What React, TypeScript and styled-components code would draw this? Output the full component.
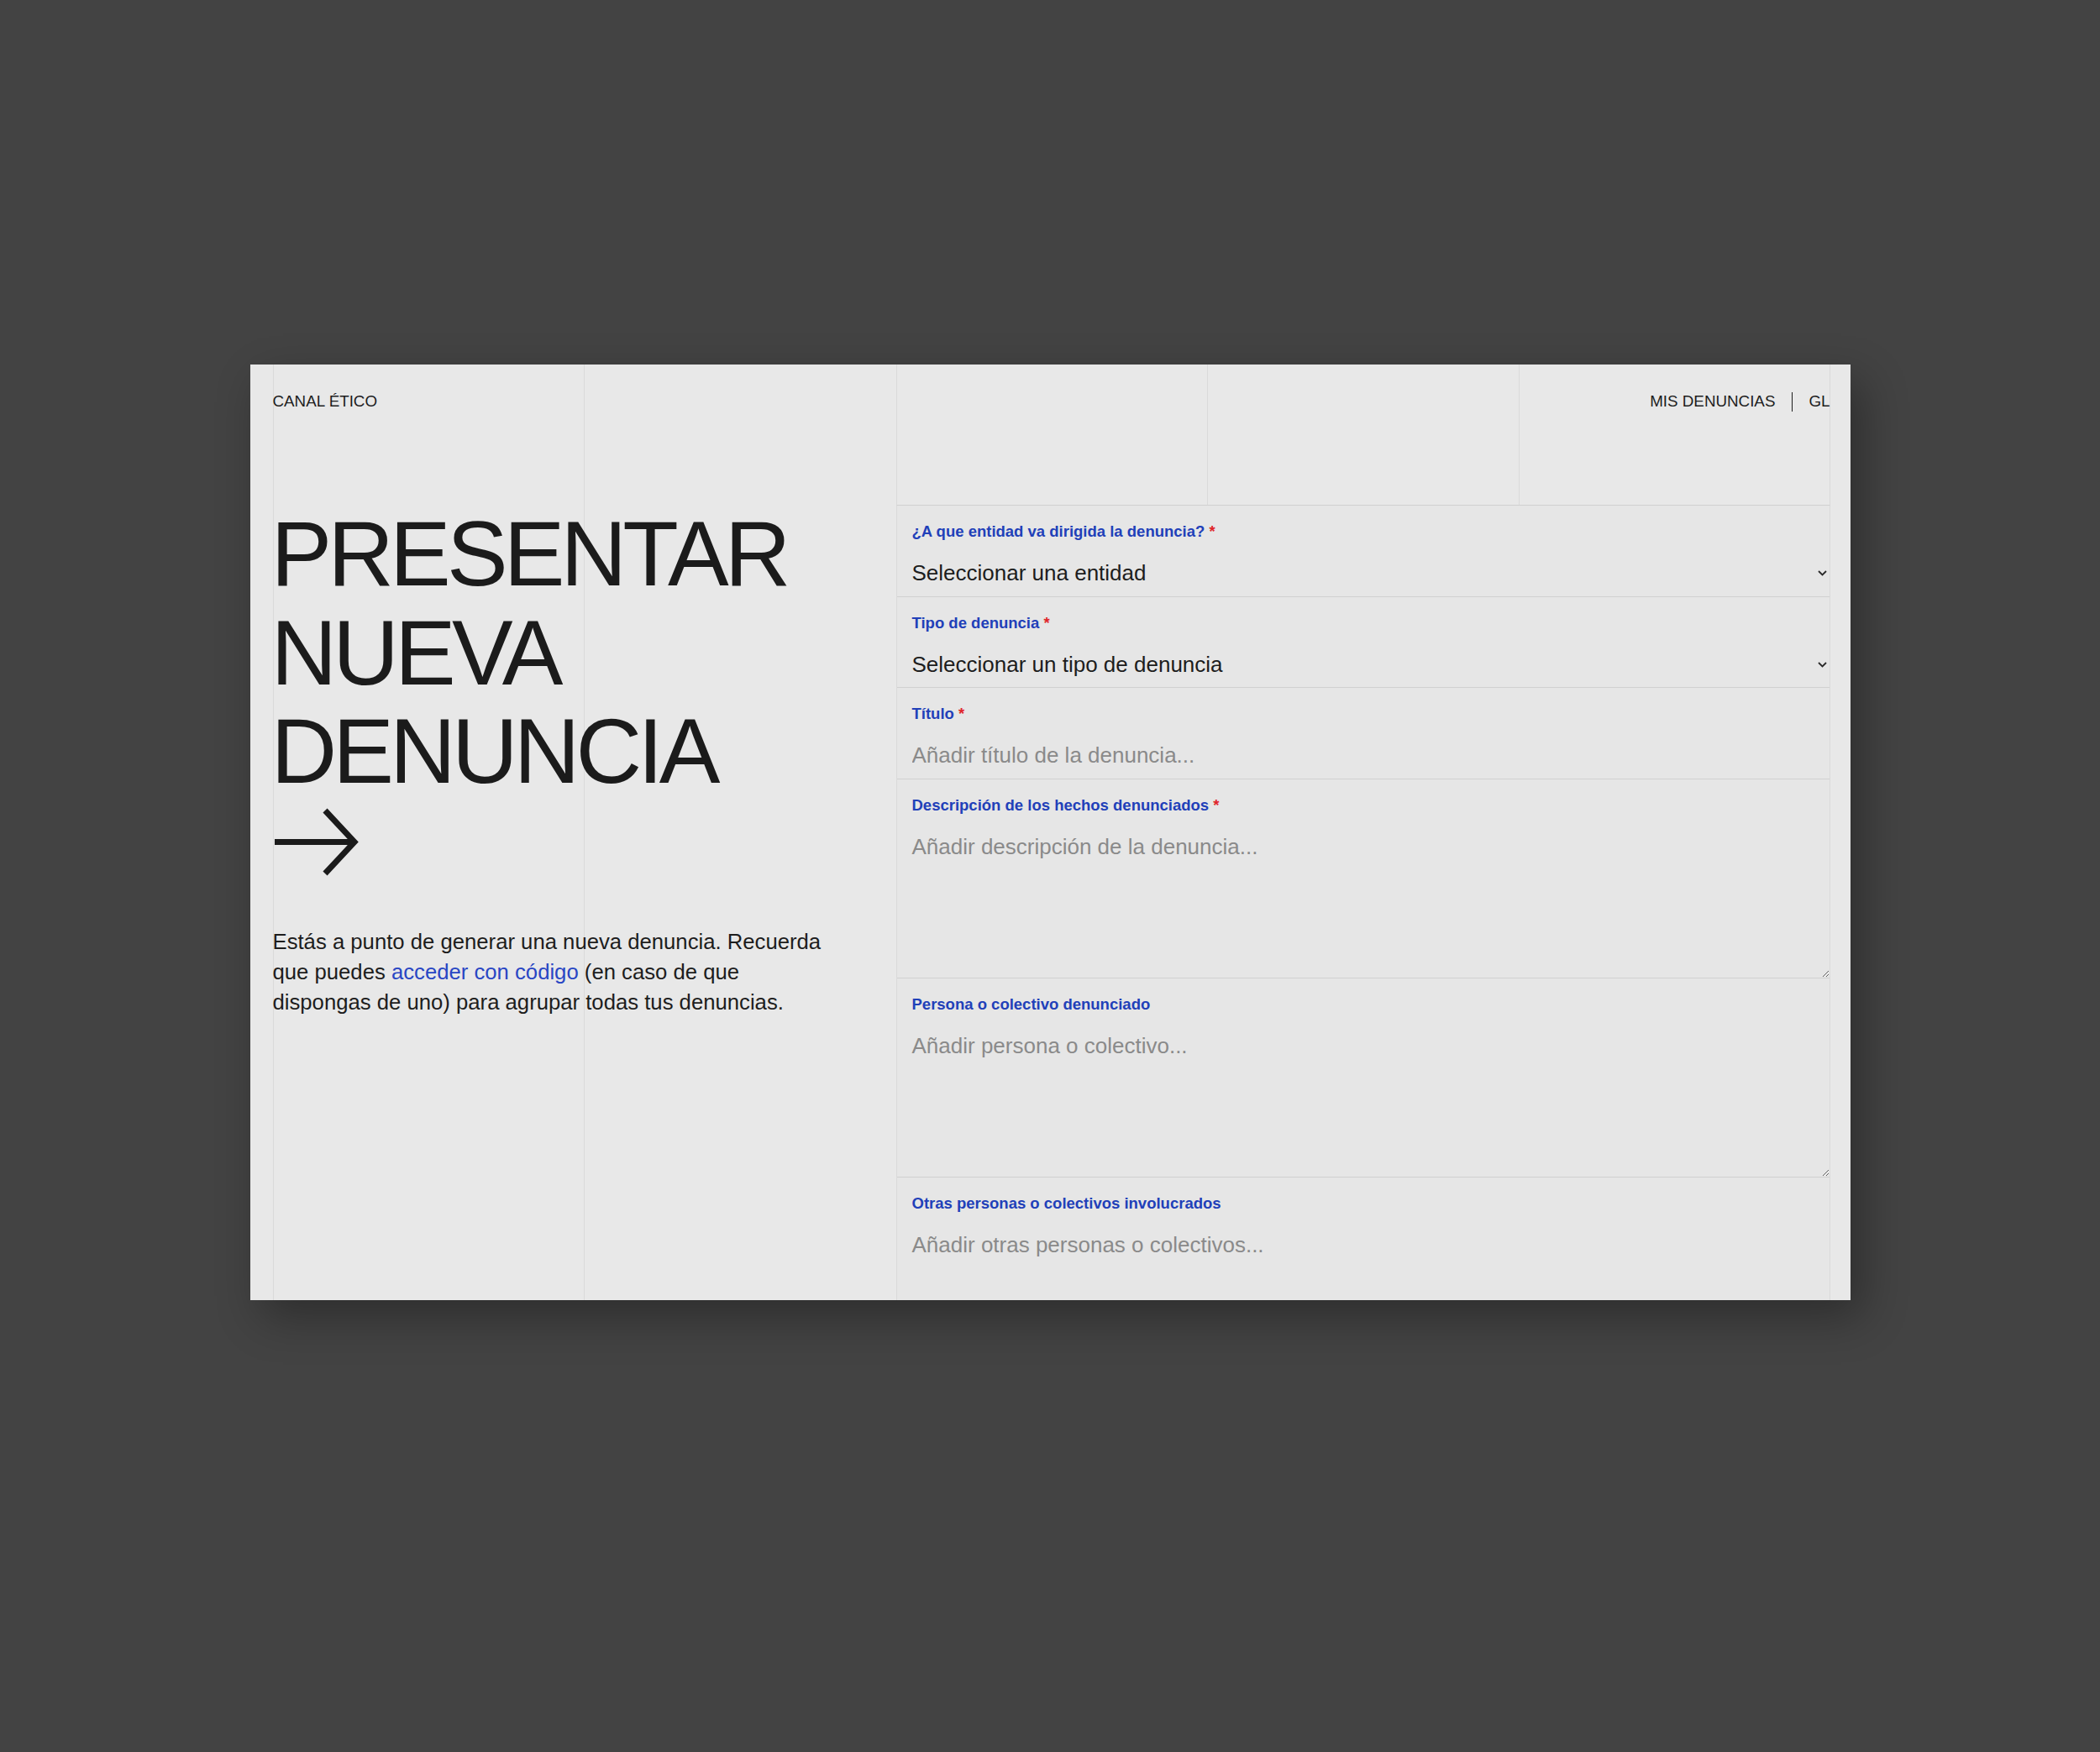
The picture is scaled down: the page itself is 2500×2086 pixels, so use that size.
import React from 'react'
import styled, { createGlobalStyle } from 'styled-components'

const FONT = `'Liberation Sans', Arial, sans-serif`

// column rules of the page grid, in px from the card's left edge
const GRID_LINES = [27, 397, 769, 1139, 1510, 1880]

const GlobalStyle = createGlobalStyle`
  html, body {
    margin: 0;
    padding: 0;
  }
  body {
    background: #434343;
    font-family: ${FONT};
  }
  * {
    box-sizing: border-box;
  }
`

const Page = styled.div`
  min-height: 2086px;
  display: flex;
  justify-content: center;
  align-items: flex-start;
  padding-top: 434px;
`

const Card = styled.div`
  width: 1905px;
  height: 1114px;
  overflow: hidden;
  display: flex;
  flex-direction: column;
  padding: 0 24px 0 27px;
  background-color: #e8e8e8;
  background-image: ${GRID_LINES.map(() => 'linear-gradient(#dadada, #dadada)').join(', ')};
  background-size: 1px 100%;
  background-repeat: no-repeat;
  background-position: ${GRID_LINES.map((x) => `${x}px 0`).join(', ')};
  box-shadow: 14px 20px 50px rgba(0, 0, 0, 0.32);
  color: #1d1d1d;
`

const Header = styled.header`
  flex-shrink: 0;
  height: 167px;
  display: flex;
  justify-content: space-between;
  align-items: flex-start;
  padding-top: 32px;
  font-size: 18.8px;
  line-height: 24px;
  text-transform: uppercase;
`

const Brand = styled.a`
  color: inherit;
  text-decoration: none;
`

const Nav = styled.nav`
  display: flex;
  align-items: center;
  gap: 19.5px;
`

const NavLink = styled.a`
  color: inherit;
  text-decoration: none;
`

const NavDivider = styled.span`
  width: 1px;
  height: 23px;
  background: #1d1d1d;
`

const Main = styled.main`
  flex: 1;
  display: grid;
  grid-template-columns: 742px 1112px;
  align-items: start;
`

const Intro = styled.section`
  display: flex;
  flex-direction: column;
  align-items: flex-start;
  padding-right: 40px;
`

const Title = styled.h1`
  margin: 0 0 0 -2px;
  font-size: 109px;
  line-height: 117.5px;
  font-weight: 400;
  letter-spacing: -0.045em;
  text-transform: uppercase;
  color: #1b1b1b;
`

const Arrow = styled.svg`
  display: block;
  margin-top: 7.5px;
`

const Lead = styled.p`
  margin: 57.5px 0 0;
  max-width: 662px;
  font-size: 25.7px;
  line-height: 36px;
`

const Link = styled.a`
  color: #2946c4;
  text-decoration: none;
`

const Form = styled.form`
  background: #e6e6e6;
  border-top: 1px solid #d0d0d0;
  border-left: 1px solid #dadada;
  border-right: 1px solid #dadada;
  min-height: 1000px;
`

const Field = styled.div<{ $open?: boolean }>`
  position: relative;
  display: flex;
  flex-direction: column;
  padding-top: 19px;
  padding-bottom: ${(p) => (p.$open ? '0' : '11.6px')};
  border-bottom: 1px solid #d0d0d0;
`

const Label = styled.label`
  padding: 0 18px;
  font-size: 18.5px;
  font-weight: 700;
  line-height: 24px;
  color: #2140b9;
`

const Required = styled.span`
  color: #e0262b;
`

const controlBase = `
  display: block;
  width: 100%;
  margin: 21px 0 0;
  border: 0;
  background: transparent;
  font-family: ${FONT};
  font-size: 26px;
  line-height: 32px;
  color: #1d1d1d;
  outline: none;
  &::placeholder {
    color: #8a8a8a;
    opacity: 1;
  }
`

const SelectWrap = styled.div`
  position: relative;
`

const Select = styled.select`
  ${controlBase}
  appearance: none;
  height: 32px;
  padding: 0 40px 0 18px;
`

const Chevron = styled.svg`
  position: absolute;
  right: 3px;
  bottom: 12px;
  pointer-events: none;
`

const TextInput = styled.input`
  ${controlBase}
  height: 32px;
  padding: 0 18px;
`

const TextArea = styled.textarea`
  ${controlBase}
  height: 172px;
  padding: 0 18px;
  resize: vertical;
`

type FieldSpec = {
  id: string
  label: string
  required?: boolean
  kind: 'select' | 'input' | 'textarea'
  placeholder: string
}

const FIELDS: FieldSpec[] = [
  {
    id: 'entity',
    label: '¿A que entidad va dirigida la denuncia?',
    required: true,
    kind: 'select',
    placeholder: 'Seleccionar una entidad',
  },
  {
    id: 'type',
    label: 'Tipo de denuncia',
    required: true,
    kind: 'select',
    placeholder: 'Seleccionar un tipo de denuncia',
  },
  {
    id: 'title',
    label: 'Título',
    required: true,
    kind: 'input',
    placeholder: 'Añadir título de la denuncia...',
  },
  {
    id: 'description',
    label: 'Descripción de los hechos denunciados',
    required: true,
    kind: 'textarea',
    placeholder: 'Añadir descripción de la denuncia...',
  },
  {
    id: 'accused',
    label: 'Persona o colectivo denunciado',
    kind: 'textarea',
    placeholder: 'Añadir persona o colectivo...',
  },
  {
    id: 'others',
    label: 'Otras personas o colectivos involucrados',
    kind: 'textarea',
    placeholder: 'Añadir otras personas o colectivos...',
  },
]

function FormField({ field }: { field: FieldSpec }) {
  return (
    <Field $open={field.kind === 'textarea'}>
      <Label htmlFor={field.id}>
        {field.label}
        {field.required && (
          <>
            {' '}
            <Required>*</Required>
          </>
        )}
      </Label>
      {field.kind === 'select' && (
        <SelectWrap>
          <Select id={field.id} defaultValue="">
            <option value="">{field.placeholder}</option>
          </Select>
          <Chevron width="11" height="7" viewBox="0 0 11 7" fill="none">
            <path d="M1 1l4.5 4.5L10 1" stroke="#2a2a2a" strokeWidth="1.8" />
          </Chevron>
        </SelectWrap>
      )}
      {field.kind === 'input' && <TextInput id={field.id} placeholder={field.placeholder} />}
      {field.kind === 'textarea' && <TextArea id={field.id} placeholder={field.placeholder} />}
    </Field>
  )
}

export default function App() {
  return (
    <>
      <GlobalStyle />
      <Page>
        <Card>
          <Header>
            <Brand href="#">Canal ético</Brand>
            <Nav>
              <NavLink href="#">Mis denuncias</NavLink>
              <NavDivider />
              <NavLink href="#">GL</NavLink>
            </Nav>
          </Header>

          <Main>
            <Intro>
              <Title>Presentar nueva denuncia</Title>
              <Arrow width="104" height="84" viewBox="0 0 104 84" fill="none">
                <path
                  d="M2 41.5H97M62 4L97 41.5L62 79"
                  stroke="#1b1b1b"
                  strokeWidth="7"
                  strokeLinejoin="miter"
                />
              </Arrow>
              <Lead>
                Estás a punto de generar una nueva denuncia. Recuerda que puedes{' '}
                <Link href="#">acceder con código</Link> (en caso de que dispongas de uno) para
                agrupar todas tus denuncias.
              </Lead>
            </Intro>

            <Form onSubmit={(e) => e.preventDefault()}>
              {FIELDS.map((field) => (
                <FormField field={field} key={field.id} />
              ))}
            </Form>
          </Main>
        </Card>
      </Page>
    </>
  )
}
